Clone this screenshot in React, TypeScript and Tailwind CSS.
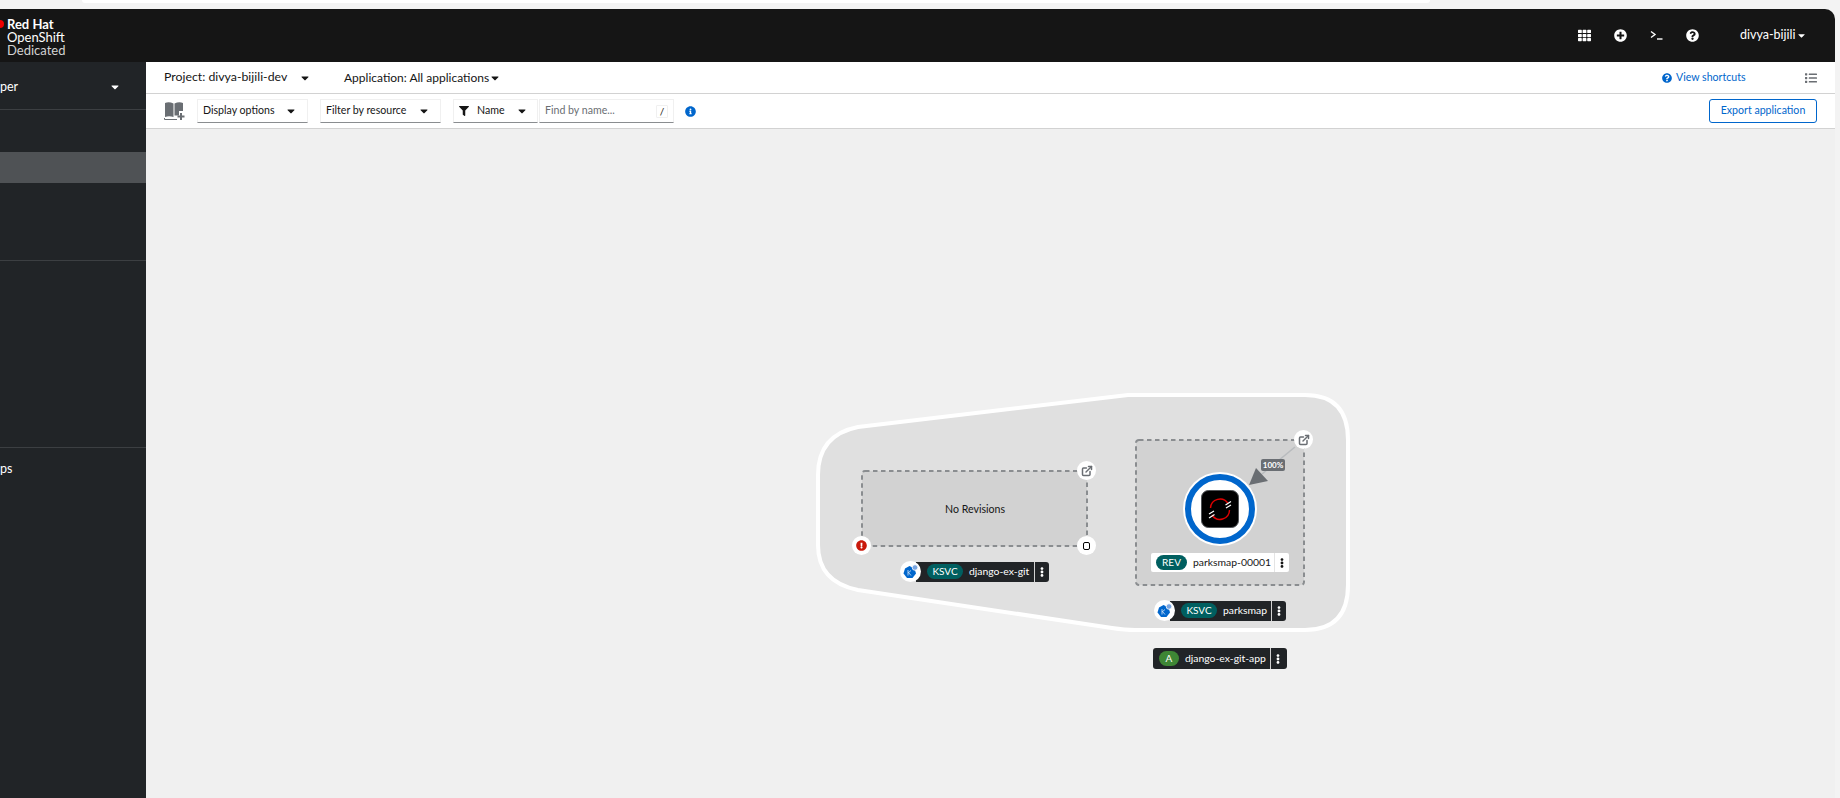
import { ExternalLink } from "lucide-react";
import {
  FaCaretDown,
  FaEllipsisV,
  FaExclamationCircle,
  FaFilter,
  FaInfoCircle,
  FaList,
  FaPlusCircle,
  FaQuestionCircle,
  FaTh,
} from "react-icons/fa";

function BookIcon() {
  return (
    <svg width="22" height="20" viewBox="0 0 22 20">
      <path d="M1 2 Q5 0.5 9.5 2.5 V16 Q5 14.5 1 16 Z" fill="#6a6e73" />
      <path d="M10.5 2.5 Q15 0.5 19 2 V10 H15 V14.5 H10.5 Z" fill="#6a6e73" />
      <path d="M0.5 17 V18.5 H13" stroke="#6a6e73" strokeWidth="1" fill="none" />
      <path d="M17 12 V19 M13.5 15.5 H20.5" stroke="#6a6e73" strokeWidth="2" />
    </svg>
  );
}

function KnativeIcon() {
  return (
    <svg width="21" height="21" viewBox="0 0 21 21">
      <circle cx="10.5" cy="10.5" r="10.5" fill="#fff" />
      <path d="M9.5 5 L14.5 7.5 L16 12.5 L12.5 17 L7 17 L3.5 12.5 L5 7.5 Z" fill="#0066cc" />
      <circle cx="15" cy="6.5" r="2.8" fill="#7aa5e0" stroke="#fff" strokeWidth="0.8" />
      <path d="M8 9 V14.5 M8 12 L11 9.5 M8.5 11.5 L11 14.5" stroke="#d6e6f7" strokeWidth="0.8" fill="none" />
    </svg>
  );
}

function Pill({ text, bg, w }: { text: string; bg: string; w: string }) {
  return (
    <span className={`flex h-[15px] shrink-0 items-center justify-center rounded-full text-[10px] text-white ${bg} ${w}`}>
      {text}
    </span>
  );
}

function Kebab({ light }: { light?: boolean }) {
  return (
    <span
      className={`flex h-full w-[15px] items-center justify-center border-l ${
        light ? "border-[#e4e4e4] text-[#151515]" : "border-[#d2d2d2] text-white"
      }`}
    >
      <FaEllipsisV size={10} />
    </span>
  );
}

function DarkLabel({ text, className, textW }: { text: string; className: string; textW: string }) {
  return (
    <div className={`absolute flex items-center ${className}`}>
      <span className="z-10 -mr-[5px] flex">
        <KnativeIcon />
      </span>
      <div className="flex h-[20px] items-center rounded-r-[3px] bg-[#212427] pl-[11px] text-[10.4px] text-white">
        <Pill text="KSVC" bg="bg-[#005f60]" w="w-[36px]" />
        <span className={`ml-[6px] mr-[5px] ${textW}`}>{text}</span>
        <Kebab />
      </div>
    </div>
  );
}

function Handle({ className, children }: { className: string; children: React.ReactNode }) {
  return (
    <span className={`absolute flex h-[19px] w-[19px] items-center justify-center rounded-full bg-white ${className}`}>
      {children}
    </span>
  );
}

function SelectBox({ text, className, textW }: { text: string; className: string; textW: string }) {
  return (
    <div className={`flex h-[24px] items-center border border-[#f0f0f0] border-b-[#8a8d90] bg-white pl-[5px] ${className}`}>
      <span className={textW}>{text}</span>
      <FaCaretDown size={12} className="text-[#151515]" />
    </div>
  );
}

function Topology() {
  return (
    <div className="relative min-h-0 flex-1 overflow-hidden bg-[#f0f0f0]">
      {/* canvas is offset by the sidebar width and toolbar height */}
      <svg className="absolute -left-[146px] -top-[129px]" width="1840" height="798">
        <path
          d="M858 427 L1128 395 L1305 395 Q1348 395 1348 440 L1348 585 Q1348 630 1305 630 L1135 630 Q1125 630 1112 628 L858 590 Q818 582 818 545 L818 475 Q818 435 858 427 Z"
          fill="#e0e0e0"
          stroke="#fff"
          strokeWidth="4"
        />
        <rect x="862" y="471" width="225" height="75" rx="3" fill="#d2d2d2" stroke="#8a8d90" strokeWidth="2" strokeDasharray="4.5 3.5" />
        <rect x="1136" y="440" width="168" height="145" rx="3" fill="#d2d2d2" stroke="#8a8d90" strokeWidth="2" strokeDasharray="4.5 3.5" />
        <line x1="1295" y1="447" x2="1262" y2="474" stroke="#b8bbbe" strokeWidth="1.5" />
        <path d="M1249 485 L1256 468 L1268 481 Z" fill="#6a6e73" />
        <circle cx="1220" cy="509" r="37" fill="#fff" />
        <circle cx="1220" cy="509" r="32" fill="#fff" stroke="#0066cc" strokeWidth="6" />
        <rect x="1201.5" y="490.5" width="37" height="37" rx="7" fill="#000" stroke="#4f5255" strokeWidth="1" />
        <path d="M1210.5 508 A9.5 9.5 0 0 1 1228 503.5" stroke="#e00000" strokeWidth="1.4" fill="none" />
        <path d="M1229.5 510 A9.5 9.5 0 0 1 1212 515" stroke="#e00000" strokeWidth="1.4" fill="none" />
        <path d="M1225.5 505 L1231 501.5 M1226 508 L1231 505 M1209 514 L1214 511 M1209 518 L1214.5 514.5" stroke="#fff" strokeWidth="1.2" />
      </svg>

      <span className="absolute left-[799px] top-[372px] w-[60px] text-center text-[10.6px] leading-4 text-[#151515]">
        No Revisions
      </span>

      <Handle className="left-[931px] top-[332px] text-[#6a6e73]">
        <ExternalLink size={12} strokeWidth={3} />
      </Handle>
      <Handle className="left-[706px] top-[407px] text-[#c9190b]">
        <FaExclamationCircle size={11} />
      </Handle>
      <Handle className="left-[931px] top-[407px]">
        <span className="h-[8px] w-[7px] rounded-[2px] border border-black" />
      </Handle>
      <Handle className="left-[1148px] top-[301px] text-[#6a6e73]">
        <ExternalLink size={12} strokeWidth={3} />
      </Handle>

      <span className="absolute left-[1115px] top-[330px] flex h-[12px] w-[24px] items-center justify-center rounded-[2px] bg-[#6a6e73] text-[8px] font-bold text-white">
        100%
      </span>

      <div className="absolute left-[1005px] top-[424px] flex h-[19px] w-[138px] items-center rounded-[2px] bg-white pl-[5px] text-[10.4px] text-[#151515]">
        <Pill text="REV" bg="bg-[#005f60]" w="w-[31px]" />
        <span className="ml-[6px] w-[81px]">parksmap-00001</span>
        <Kebab light />
      </div>

      <DarkLabel text="django-ex-git" textW="w-[60px]" className="left-[754px] top-[432px]" />
      <DarkLabel text="parksmap" textW="w-[43px]" className="left-[1008px] top-[471px]" />

      <div className="absolute left-[1007px] top-[519px] flex h-[21px] w-[134px] items-center rounded-[3px] bg-[#212427] pl-[6px] text-[10.4px] text-white">
        <Pill text="A" bg="bg-[#3e8635]" w="w-[20px]" />
        <span className="ml-[6px] w-[85px]">django-ex-git-app</span>
        <Kebab />
      </div>
    </div>
  );
}

export default function App() {
  return (
    <div className="flex h-screen flex-col overflow-hidden whitespace-nowrap bg-[#f3f3f3] font-['Lato',sans-serif] text-[10.6px] text-[#151515]">
      {/* browser strip above the app */}
      <div className="h-[9px] shrink-0 pl-[82px]">
        <div className="h-[3px] w-[1348px] rounded-b-[8px] bg-white" />
      </div>

      <div className="flex min-h-0 flex-1 flex-col pr-[5px]">
        <header className="flex h-[53px] shrink-0 items-center justify-between rounded-tr-[10px] bg-[#151515] text-white">
          <div className="relative pl-[7px] pt-[3px] text-[13px] leading-[13px]">
            <span className="absolute -left-[4px] top-[5px] h-[8px] w-[8px] rounded-full bg-[#ee0000]" />
            <div className="font-bold">Red Hat</div>
            <div>OpenShift</div>
            <div className="text-[#d2d2d2]">Dedicated</div>
          </div>
          <div className="flex items-center">
            <FaTh size={13} />
            <FaPlusCircle size={13} className="ml-[23px]" />
            <svg width="13" height="13" viewBox="0 0 13 13" className="ml-[23px]" fill="none" stroke="#fff">
              <path d="M1 2.5 L5 5.5 L1 8.5" strokeWidth="1.4" />
              <path d="M7 10 H12.5" strokeWidth="1.4" />
            </svg>
            <FaQuestionCircle size={13} className="ml-[23px]" />
            <span className="ml-[41px] w-[55px] text-[12.5px]">divya-bijili</span>
            <FaCaretDown size={11} className="ml-[1px] mr-[28px]" />
          </div>
        </header>

        <div className="flex min-h-0 flex-1">
          <aside className="flex w-[146px] shrink-0 flex-col bg-[#212427] text-[12.5px] text-white">
            <div className="flex h-[48px] items-center justify-between border-b border-[#3c3f42] pr-[25px] pt-[3px]">
              <span>per</span>
              <FaCaretDown size={12} />
            </div>
            <div className="h-[42px]" />
            <div className="h-[31px] bg-[#4f5255]" />
            <div className="h-[78px] border-b border-[#3c3f42]" />
            <div className="h-[187px] border-b border-[#3c3f42]" />
            <div className="pt-[13px] leading-4">ps</div>
          </aside>

          <main className="flex min-w-0 flex-1 flex-col">
            <div className="flex h-[32px] shrink-0 items-center border-b border-[#d2d2d2] bg-white pl-[18px] pr-[18px]">
              <span className="w-[123px] text-[12.3px]">Project: divya-bijili-dev</span>
              <FaCaretDown size={12} className="ml-[12px]" />
              <span className="ml-[33px] w-[145px] text-[12px]">Application: All applications</span>
              <FaCaretDown size={12} />
              <FaQuestionCircle size={10} className="ml-auto text-[#0066cc]" />
              <span className="ml-[4px] w-[69px] text-[#0066cc]">View shortcuts</span>
              <FaList size={12} className="ml-[60px] text-[#6a6e73]" />
            </div>

            <div className="flex h-[35px] shrink-0 items-center border-b border-[#d2d2d2] bg-white pl-[18px] pr-[18px]">
              <BookIcon />
              <SelectBox text="Display options" className="ml-[11px] w-[111px]" textW="w-[82px]" />
              <SelectBox text="Filter by resource" className="ml-[12px] w-[121px]" textW="w-[92px]" />
              <div className="ml-[12px] flex h-[24px] w-[85px] items-center border border-[#f0f0f0] border-b-[#8a8d90] pl-[5px]">
                <FaFilter size={10} />
                <span className="ml-[8px] w-[39px]">Name</span>
                <FaCaretDown size={12} />
              </div>
              <div className="ml-[1px] flex h-[24px] w-[135px] items-center justify-between border border-[#f0f0f0] border-b-[#8a8d90] px-[5px]">
                <span className="text-[#6a6e73]">Find by name...</span>
                <span className="flex h-[13px] w-[12px] items-center justify-center rounded-[1px] border border-[#f0f0f0] text-[10px]">/</span>
              </div>
              <FaInfoCircle size={11} className="ml-[11px] text-[#0066cc]" />
              <button className="ml-auto h-[24px] w-[108px] rounded-[3px] border border-[#0066cc] text-[#0066cc]">
                Export application
              </button>
            </div>

            <Topology />
          </main>
        </div>
      </div>
    </div>
  );
}
